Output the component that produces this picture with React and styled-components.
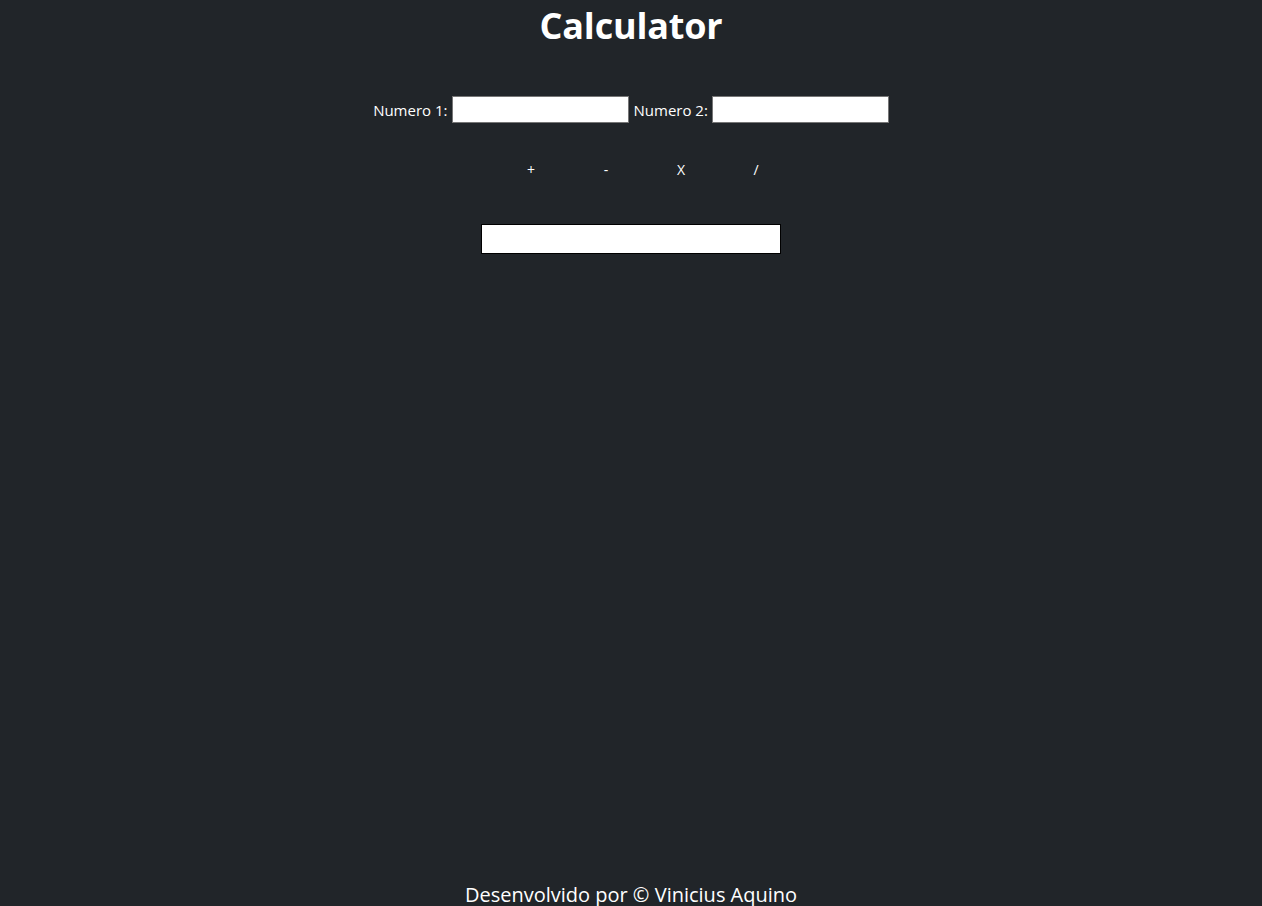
import React from 'react';
import styled, { createGlobalStyle } from 'styled-components';

const GlobalStyle = createGlobalStyle`
  html, body {
    margin: 0;
    padding: 0;
    background: #212529;
  }
  body {
    font-family: "Open Sans", "Noto Sans", sans-serif;
    color: #fff;
  }
`;

const Page = styled.div`
  min-height: 100vh;
  display: flex;
  flex-direction: column;
  align-items: center;
  background: #212529;
`;

const Title = styled.h1`
  margin: 2px 0 0;
  font-size: 36px;
  font-weight: 700;
  line-height: 48px;
  letter-spacing: -0.2px;
`;

const Fields = styled.div`
  margin-top: 46px;
  display: flex;
  align-items: center;
  font-size: 15px;
`;

const Label = styled.label`
  display: flex;
  align-items: center;
  gap: 4px;
  margin-left: ${p => (p.$first ? '0' : '5px')};
`;

const NumberInput = styled.input`
  box-sizing: border-box;
  width: 177px;
  height: 27px;
  border: 1px solid #767676;
  background: #fff;
  padding: 2px 4px;
  font-size: 14px;
`;

const Ops = styled.div`
  margin-top: 32px;
  display: flex;
  width: 300px;
`;

const OpButton = styled.button`
  width: 50px;
  margin-left: 25px;
  height: 28px;
  background: transparent;
  border: none;
  color: #fff;
  font-family: "Open Sans", "Noto Sans", sans-serif;
  font-size: 14px;
  cursor: pointer;
`;

const Result = styled.div`
  margin-top: 41px;
  box-sizing: border-box;
  width: 300px;
  height: 30px;
  background: #fff;
  border: 1px solid #000;
`;

const Footer = styled.footer`
  margin-top: auto;
  font-size: 20px;
  line-height: 24px;
  margin-bottom: -1px;
`;

export default function App() {
  return (
    <>
      <GlobalStyle />
      <Page>
        <Title>Calculator</Title>
        <Fields>
          <Label $first>
            Numero 1: <NumberInput type="text" />
          </Label>
          <Label>
            Numero 2: <NumberInput type="text" />
          </Label>
        </Fields>
        <Ops>
          <OpButton>+</OpButton>
          <OpButton>-</OpButton>
          <OpButton>X</OpButton>
          <OpButton>/</OpButton>
        </Ops>
        <Result />
        <Footer>Desenvolvido por © Vinicius Aquino</Footer>
      </Page>
    </>
  );
}
